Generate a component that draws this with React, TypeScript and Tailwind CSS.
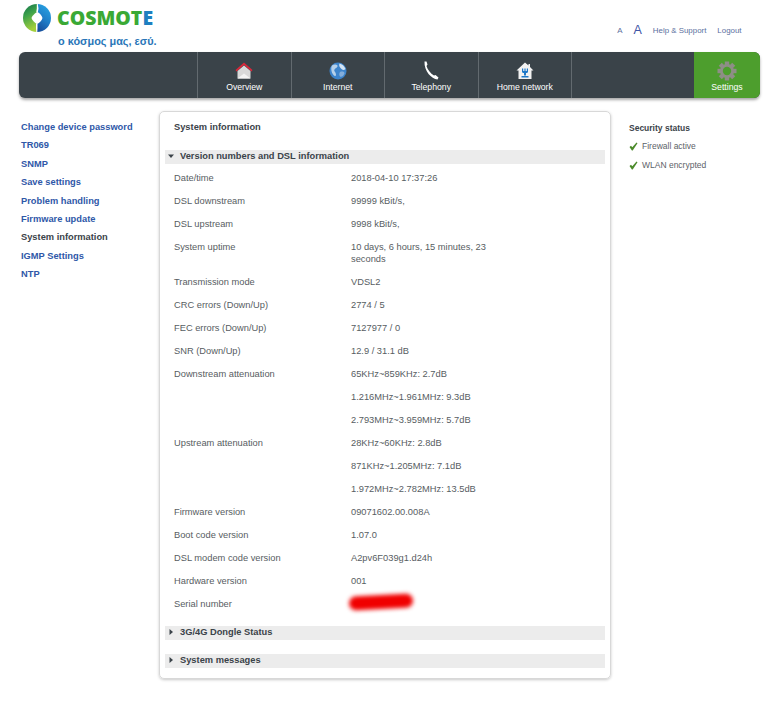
function LogoMark() {
  return (
    <svg width="28" height="28" viewBox="0 0 28 28" className="shrink-0">
      <defs>
        <linearGradient id="logoLeft" x1="0" y1="0" x2="0.300" y2="1">
          <stop offset="0" stopColor="#0e6f4c" />
          <stop offset="0.450" stopColor="#3fa34a" />
          <stop offset="1" stopColor="#a3cf3c" />
        </linearGradient>
        <linearGradient id="logoRight" x1="0.700" y1="0" x2="0.300" y2="1">
          <stop offset="0" stopColor="#27a4e4" />
          <stop offset="0.550" stopColor="#1f7cc6" />
          <stop offset="1" stopColor="#184f9c" />
        </linearGradient>
      </defs>
      <path d="M14 0A14 14 0 0 0 14 28Z" fill="url(#logoLeft)" />
      <path d="M14 0A14 14 0 0 1 14 28Z" fill="url(#logoRight)" />
      <path d="M14.500 8C16.500 9 19 11.500 19.500 14C19 16 16.500 19 14 20C12 19 9 16.500 8.500 14C9 12 12 9 14.500 8Z" fill="#ffffff" />
      <path d="M13.800 0H14.800L15.500 4.500L14.800 8.500H13.200L13.800 4.500ZM13.300 28H14.300L14.500 24L14.500 19.500H13L13 24Z" fill="#ffffff" />
    </svg>
  );
}

function HomeIcon() {
  return (
    <svg width="18" height="17" viewBox="0 0 18 17">
      <path d="M9 0.500L0.500 8L1.500 9.500L9 3L16.500 9.500L17.500 8Z" fill="#d8273a" />
      <path d="M2.500 9L9 3.500L15.500 9V16.500H2.500Z" fill="#d9d9d9" />
      <path d="M2.500 16.500L9 11.500L15.500 16.500Z" fill="#f4f4f4" />
    </svg>
  );
}

function GlobeIcon() {
  return (
    <svg width="18" height="18" viewBox="0 0 18 18">
      <circle cx="9" cy="9" r="8.500" fill="#3d84cc" />
      <path d="M3 3.500C5 2 7.500 2 8.500 3.500C9 5.500 6.500 6 5.500 7.500C4.500 9.500 7 10 7 12.500C7 14.500 5.500 14.500 4.500 13C2.500 11 1.500 6 3 3.500Z" fill="#b5d0ea" />
      <path d="M10.500 1.500C13 2 15.500 4 16.500 7C15 8.500 13 8 12 6.500C11 5 9.500 4 10.500 1.500Z" fill="#d2e3f4" />
      <path d="M11 10C13 9 15.500 9.500 15.500 11.500C14.500 14 12.500 15.500 11 14.500C10 13.500 10 11 11 10Z" fill="#84aedb" />
    </svg>
  );
}

function PhoneIcon() {
  return (
    <svg width="16" height="19" viewBox="0 0 16 19">
      <path d="M1.500 0.500L3.500 0.500L4.500 3.500L3.500 5C4.500 8.500 7.500 12.500 11 14.500L12.500 14L15.500 16.500L14.500 18.500C8.500 18 1 10 1.500 0.500Z" fill="#ffffff" />
    </svg>
  );
}

function NetworkIcon() {
  return (
    <svg width="18" height="18" viewBox="0 0 18 18">
      <path d="M9 0.500L0.500 8.500H2.500V17H15.500V8.500H17.500L14 5V2H12.500V3.500Z" fill="#f2f2f2" />
      <path d="M6 6.500H7.200V9H8.400V6.500H9.600V9H10.800V6.500H12V9.500C12 10.500 11 11 10 11V13.500H8V11C7 11 6 10.500 6 9.500Z" fill="#1f78c8" />
      <path d="M5.500 14H12.500V15.500H5.500Z" fill="#1f78c8" />
    </svg>
  );
}

function GearIcon() {
  return (
    <svg width="20" height="20" viewBox="0 0 20 20">
      <g fill="#8e8e86">
        <rect x="7.800" y="0.500" width="4.400" height="19" />
        <rect x="7.800" y="0.500" width="4.400" height="19" transform="rotate(45 10 10)" />
        <rect x="7.800" y="0.500" width="4.400" height="19" transform="rotate(90 10 10)" />
        <rect x="7.800" y="0.500" width="4.400" height="19" transform="rotate(135 10 10)" />
        <circle cx="10" cy="10" r="7" />
      </g>
      <circle cx="10" cy="10" r="4.200" fill="#4d9e2d" />
    </svg>
  );
}

function Check() {
  return (
    <svg width="9" height="9" viewBox="0 0 9 9" className="shrink-0">
      <path d="M0.500 5L2 3.800L3.300 5.200L7.500 0.500L8.500 1.200L3.700 8.500H2.900Z" fill="#4c8a2b" />
    </svg>
  );
}

function Caret({ open }: { open?: boolean }) {
  return (
    <svg width="6" height="6" viewBox="0 0 6 6" className="shrink-0">
      <path d={open ? "M0 1.500H6L3 5Z" : "M1.500 0L5 3L1.500 6Z"} fill="#3b4349" />
    </svg>
  );
}

const navItems = [
  { label: "Overview", icon: <HomeIcon /> },
  { label: "Internet", icon: <GlobeIcon /> },
  { label: "Telephony", icon: <PhoneIcon /> },
  { label: "Home network", icon: <NetworkIcon /> },
];

const sideLinks = [
  "Change device password",
  "TR069",
  "SNMP",
  "Save settings",
  "Problem handling",
  "Firmware update",
  "System information",
  "IGMP Settings",
  "NTP",
];

const rows: [string, string][] = [
  ["Date/time", "2018-04-10 17:37:26"],
  ["DSL downstream", "99999 kBit/s,"],
  ["DSL upstream", "9998 kBit/s,"],
  ["System uptime", "10 days, 6 hours, 15 minutes, 23 seconds"],
  ["Transmission mode", "VDSL2"],
  ["CRC errors (Down/Up)", "2774 / 5"],
  ["FEC errors (Down/Up)", "7127977 / 0"],
  ["SNR (Down/Up)", "12.9 / 31.1 dB"],
  ["Downstream attenuation", "65KHz~859KHz: 2.7dB"],
  ["", "1.216MHz~1.961MHz: 9.3dB"],
  ["", "2.793MHz~3.959MHz: 5.7dB"],
  ["Upstream attenuation", "28KHz~60KHz: 2.8dB"],
  ["", "871KHz~1.205MHz: 7.1dB"],
  ["", "1.972MHz~2.782MHz: 13.5dB"],
  ["Firmware version", "09071602.00.008A"],
  ["Boot code version", "1.07.0"],
  ["DSL modem code version", "A2pv6F039g1.d24h"],
  ["Hardware version", "001"],
  ["Serial number", ""],
];

function SectionBar({ title, open }: { title: string; open?: boolean }) {
  return (
    <div className="flex h-[14px] items-center gap-[6px] bg-[#ececec] pb-[2px] pl-[3px] text-[9.300px] font-bold leading-[12px] text-[#3b4349]">
      <Caret open={open} />
      <span>{title}</span>
    </div>
  );
}

export default function App() {
  return (
    <div className="h-[720px] w-[775px] overflow-hidden bg-white font-['Liberation_Sans',Arial,sans-serif]">
      <header className="flex h-[52px] pl-[23px] pr-[33.500px]">
        <div className="flex flex-col pt-[4px]">
          <div className="flex items-center gap-[6px]">
            <LogoMark />
            <span className="font-['Open_Sans',sans-serif] text-[19.500px] font-extrabold leading-[24px] text-[#3aa935]">
              COSMOT<span className="text-[#1d7fc0]">E</span>
            </span>
          </div>
          <span className="ml-[35px] mt-[2px] text-[10.900px] font-bold leading-[14px] text-[#2a76b8]">ο κόσμος μας, εσύ.</span>
        </div>
        <div className="ml-auto flex items-center gap-[11px] pt-[9px] text-[7.900px] text-[#5b6f9e]">
          <span>A</span>
          <span className="text-[12.500px] text-[#3f55a5]">A</span>
          <span>Help &amp; Support</span>
          <span>Logout</span>
        </div>
      </header>

      <nav className="ml-[19px] flex h-[46px] w-[741px] overflow-hidden rounded-[6px] bg-[#3a4349] shadow-[0_2px_3px_rgba(0,0,0,0.35)]">
        <div className="w-[178px] shrink-0" />
        {navItems.map((item) => (
          <div key={item.label} className="flex w-[93.500px] shrink-0 flex-col items-center border-l border-[#626a6f] pt-[9px] text-[8.700px] leading-[12px] text-white">
            <div className="flex h-[19px] items-center">{item.icon}</div>
            <span className="mt-[1px]">{item.label}</span>
          </div>
        ))}
        <div className="flex-1 border-l border-[#626a6f]" />
        <div className="flex w-[66px] shrink-0 flex-col items-center bg-[#4d9e2d] pt-[9px] text-[8.700px] leading-[12px] text-white">
          <div className="flex h-[19px] items-center"><GearIcon /></div>
          <span className="mt-[1px]">Settings</span>
        </div>
      </nav>

      <div className="mt-[13px] flex items-start">
        <aside className="ml-[21px] w-[138px] shrink-0 pt-[9px]">
          {sideLinks.map((link) => (
            <div key={link} className={`h-[18.400px] text-[9.300px] font-bold leading-[14px] ${link === "System information" ? "text-[#3b4349]" : "text-[#2f58a8]"}`}>
              {link}
            </div>
          ))}
        </aside>

        <main className="h-[568px] w-[452px] shrink-0 rounded-[5px] border border-[#d8d8d8] px-[5px] shadow-[0_1px_3px_rgba(0,0,0,0.22)]">
          <h1 className="pl-[9px] pt-[9px] text-[9.300px] font-bold leading-[12px] text-[#3b4349]">System information</h1>
          <div className="mt-[17px]">
            <SectionBar title="Version numbers and DSL information" open />
          </div>
          <div className="mt-[8px] text-[9.300px] leading-[12px] text-[#575d62]">
            {rows.map(([label, value], i) => (
              <div key={i} className="flex pb-[11px] pl-[9px]">
                <div className="w-[177px] shrink-0">{label}</div>
                <div className="relative w-[150px]">
                  {value}
                  {label === "Serial number" && (
                    <div className="absolute left-[-2px] top-[-3px] h-[14px] w-[64px] -rotate-3 rounded-full bg-[#f00000] blur-[2px]" />
                  )}
                </div>
              </div>
            ))}
          </div>
          <div className="mt-[5px]">
            <SectionBar title="3G/4G Dongle Status" />
          </div>
          <div className="mt-[14px]">
            <SectionBar title="System messages" />
          </div>
        </main>

        <aside className="ml-[18px] pt-[11px]">
          <div className="text-[8.500px] font-bold leading-[12px] text-[#3b4349]">Security status</div>
          <div className="mt-[6px] flex items-center gap-[4px] text-[8.500px] leading-[12px] text-[#5c6268]">
            <Check />
            <span>Firewall active</span>
          </div>
          <div className="mt-[7px] flex items-center gap-[4px] text-[8.500px] leading-[12px] text-[#5c6268]">
            <Check />
            <span>WLAN encrypted</span>
          </div>
        </aside>
      </div>
    </div>
  );
}
